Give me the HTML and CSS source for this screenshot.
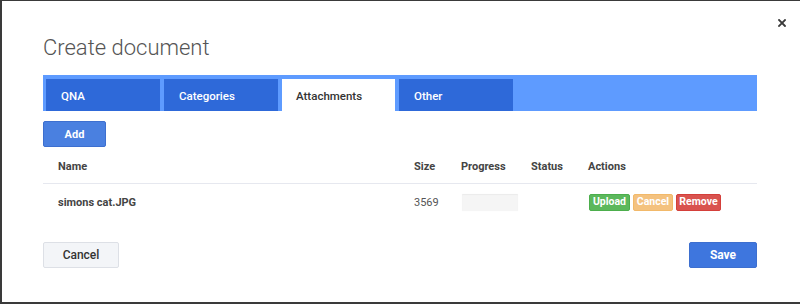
FILE: index.html
```html
<!DOCTYPE html>
<html>
<head>
<meta charset="utf-8">
<link rel="stylesheet" href="styles.css">
</head>
<body>
<div class="dialog">
  <button class="close" aria-label="Close">
    <svg width="8" height="8" viewBox="0 0 8 8"><path d="M1 1L7 7M7 1L1 7" stroke="#3a3a3a" stroke-width="1.8" stroke-linecap="square"/></svg>
  </button>
  <h1 class="title">Create document</h1>
  <div class="tabs">
    <div class="tab">QNA</div>
    <div class="tab">Categories</div>
    <div class="tab active">Attachments</div>
    <div class="tab">Other</div>
  </div>
  <button class="btn btn-primary add">Add</button>
  <div class="table">
    <div class="row head">
      <div>Name</div>
      <div>Size</div>
      <div>Progress</div>
      <div>Status</div>
      <div>Actions</div>
    </div>
    <div class="row body">
      <div class="name">simons cat.JPG</div>
      <div class="size">3569</div>
      <div><div class="progress"></div></div>
      <div></div>
      <div class="actions">
        <button class="sm green">Upload</button>
        <button class="sm orange">Cancel</button>
        <button class="sm red">Remove</button>
      </div>
    </div>
  </div>
  <div class="footer">
    <button class="btn btn-default">Cancel</button>
    <button class="btn btn-primary save">Save</button>
  </div>
</div>
</body>
</html>
```
FILE: styles.css
```css
html, body {
  margin: 0;
  padding: 0;
}
body {
  background: #3a3a3a;
  width: 800px;
  height: 304px;
  overflow: hidden;
  font-family: Roboto, "Liberation Sans", sans-serif;
}
.dialog {
  position: relative;
  background: #fff;
  margin: 1px 0 0 2px;
  height: 301px;
  box-sizing: border-box;
  padding: 0 43px 0 41px;
}
.close {
  position: absolute;
  right: 14px;
  top: 18px;
  border: 0;
  background: none;
  padding: 0;
  cursor: pointer;
  line-height: 0;
}
.title {
  margin: 0;
  padding-top: 32px;
  height: 42px;
  font-size: 22px;
  font-weight: 300;
  color: #555;
  line-height: 30px;
}
.tabs {
  display: flex;
  gap: 4px;
  background: #5e9bff;
  padding: 4px 3px 0;
  height: 36px;
  box-sizing: border-box;
}
.tab {
  width: 114px;
  background: #2e69d9;
  color: #fff;
  font-size: 11.5px;
  font-weight: 500;
  padding: 2px 0 0 15px;
  box-sizing: border-box;
  line-height: 30px;
}
.tab.active {
  background: #fff;
  color: #333;
  width: 113px;
  padding-left: 14px;
}
.btn {
  font-family: Roboto, "Liberation Sans", sans-serif;
  font-size: 11px;
  font-weight: 700;
  border-radius: 2px;
  height: 26px;
  box-sizing: border-box;
  cursor: pointer;
}
.btn-primary {
  background: #4a80e0;
  border: 1px solid #3d6fcf;
  color: #fff;
}
.add {
  margin-top: 10px;
  width: 63px;
  display: block;
}
.btn-default {
  background: #f3f5f8;
  border: 1px solid #dde0e6;
  color: #333;
  width: 76px;
  font-weight: 500;
  font-size: 12px;
}
.save {
  width: 68px;
  background: #3e76de;
  font-size: 12px;
}
.table {
  margin-top: 3px;
}
.row {
  display: grid;
  grid-template-columns: 356px 47px 70px 57px 1fr;
  padding-left: 15px;
  align-items: center;
  font-size: 11px;
  color: #444;
}
.row.head {
  height: 33px;
  font-weight: 700;
  border-bottom: 1px solid #e6e8ef;
}
.row.body {
  height: 36px;
}
.name {
  font-weight: 700;
}
.size {
  color: #555;
}
.progress {
  width: 56px;
  height: 17px;
  margin-left: 1px;
  background: #f5f5f5;
  box-shadow: inset 0 1px 1px rgba(0,0,0,0.04), 0 0 1px rgba(0,0,0,0.06);
  border-radius: 1px;
}
.actions {
  display: flex;
  gap: 3px;
  margin-left: 1px;
}
.sm {
  font-family: Roboto, "Liberation Sans", sans-serif;
  font-size: 10.5px;
  font-weight: 700;
  color: #fff;
  border: 1px solid transparent;
  border-radius: 2px;
  height: 17px;
  padding: 0;
  line-height: 14px;
}
.green { background: #5cb85c; border-color: #4cae4c; width: 41px; }
.orange { background: #f4c27f; border-color: #f2b96a; width: 40px; }
.red { background: #d9534f; border-color: #d43f3a; width: 45px; }
.footer {
  display: flex;
  justify-content: space-between;
  margin-top: 22px;
}
```
